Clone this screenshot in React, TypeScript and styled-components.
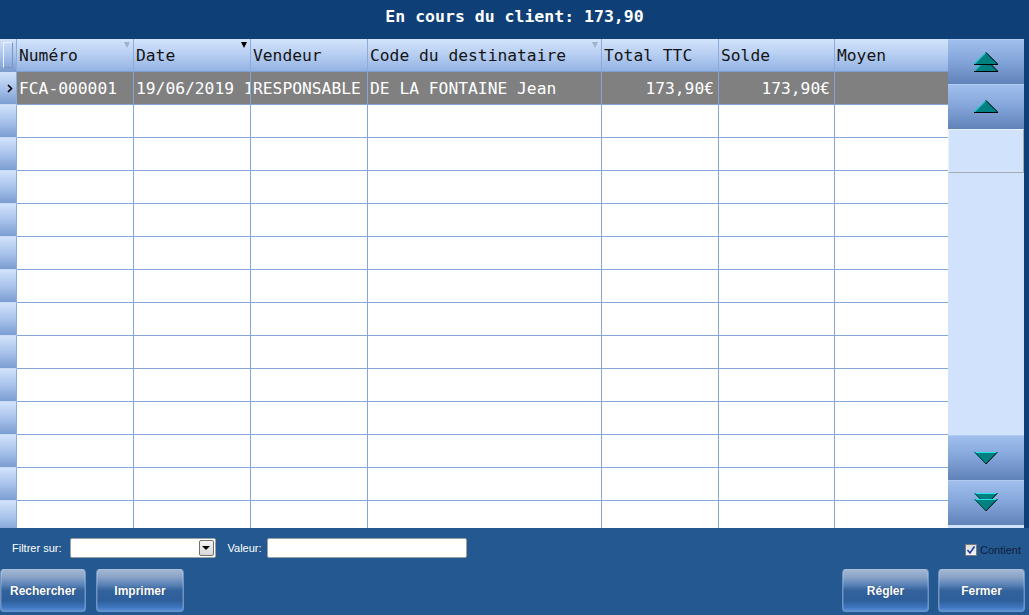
import React from 'react';
import styled, { createGlobalStyle } from 'styled-components';

const GlobalStyle = createGlobalStyle`
  html, body {
    margin: 0;
    padding: 0;
  }
  body {
    background: #0e3f76;
    overflow: hidden;
  }
`;

const COLUMNS = '17px 117px 117px 117px 234px 117px 116px 114px';
const MONO = '"DejaVu Sans Mono", "Liberation Mono", monospace';
const SANS = '"Liberation Sans", Arial, sans-serif';

const Window = styled.div`
  width: 1029px;
  height: 615px;
  display: flex;
  flex-direction: column;
  background: #0e3f76;
`;

const TitleBar = styled.div`
  height: 39px;
  padding-bottom: 6px;
  box-sizing: border-box;
  display: flex;
  align-items: center;
  justify-content: center;
  color: #ffffff;
  font-family: ${MONO};
  font-weight: bold;
  font-size: 16.5px;
`;

const Main = styled.div`
  height: 489px;
  display: flex;
  padding-right: 5px;
`;

const Grid = styled.div`
  width: 949px;
  height: 489px;
  overflow: hidden;
  background: #ffffff;
`;

const Row = styled.div`
  display: grid;
  grid-template-columns: ${COLUMNS};
  height: 33px;
`;

const HeaderCell = styled.div`
  position: relative;
  box-sizing: border-box;
  height: 33px;
  padding-left: 2px;
  display: flex;
  align-items: center;
  background: linear-gradient(180deg, #d3e4fb 0%, #b9d0f3 45%, #93b3e3 100%);
  border-right: 1px solid #8cabdb;
  border-bottom: 1px solid #7f9fd2;
  font-family: ${MONO};
  font-size: 16.3px;
  color: #141414;
  white-space: nowrap;
  overflow: hidden;
`;

const Selector = styled.div`
  box-sizing: border-box;
  height: 33px;
  display: flex;
  align-items: center;
  justify-content: center;
  padding-left: 3px;
  background: linear-gradient(180deg, #d2e3fb 0%, #a9c3ec 50%, #7b9dd1 100%);
  border-right: 1px solid #8cabdb;
  border-bottom: 1px solid #c8daf6;
`;

const HeaderSelector = styled(Selector)`
  padding-left: 0;
  border-bottom-color: #7f9fd2;
`;

const HeaderSelectorBox = styled.div`
  width: 10px;
  height: 26px;
  box-sizing: border-box;
  border: 1px solid #eef3fc;
  border-right-color: #7c95bd;
  border-bottom-color: #7c95bd;
`;

const Cell = styled.div<{ $align?: 'left' | 'right'; $selected?: boolean }>`
  box-sizing: border-box;
  height: 33px;
  display: flex;
  align-items: center;
  justify-content: ${p => (p.$align === 'right' ? 'flex-end' : 'flex-start')};
  padding: 0 4px 0 2px;
  background: ${p => (p.$selected ? '#808080' : '#ffffff')};
  color: ${p => (p.$selected ? '#ffffff' : '#000000')};
  border-right: 1px solid #86a5d8;
  border-bottom: 1px solid #86a5d8;
  font-family: ${MONO};
  font-size: 16.3px;
  white-space: nowrap;
  overflow: hidden;
`;

const SortMark = styled.span<{ $filled?: boolean }>`
  position: absolute;
  top: 3px;
  right: 3px;
  width: 0;
  height: 0;
  border-left: 3px solid transparent;
  border-right: 3px solid transparent;
  border-top: 6px solid ${p => (p.$filled ? '#000000' : '#9fb2cc')};
`;

const ScrollPanel = styled.div`
  width: 76px;
  height: 489px;
  display: flex;
  flex-direction: column;
  background: #d0e2fc;
  padding-bottom: 3px;
  box-sizing: border-box;
`;

const ScrollButton = styled.div`
  height: 45px;
  flex-shrink: 0;
  display: flex;
  align-items: center;
  justify-content: center;
  background: linear-gradient(180deg, #a0bfee 0%, #86a7db 45%, #5f82b9 100%);
  border-top: 1px solid #b2cbf0;
  box-sizing: border-box;
`;

const ScrollThumb = styled.div`
  height: 44px;
  flex-shrink: 0;
  box-sizing: border-box;
  border: 1px solid #a5a9b0;
  border-top-color: #e8f0fc;
  border-left-color: #e8f0fc;
  background: #d0e2fc;
`;

const ScrollTrack = styled.div`
  flex: 1;
`;

const BottomPanel = styled.div`
  height: 87px;
  background: #245890;
  display: flex;
  flex-direction: column;
`;

const FilterRow = styled.div`
  display: flex;
  align-items: center;
  height: 20px;
  margin-top: 10px;
  padding: 0 8px 0 12px;
  font-family: ${SANS};
  font-size: 11px;
  color: #ffffff;
`;

const Label = styled.span<{ $gap: number }>`
  margin-right: ${p => p.$gap}px;
`;

const SelectBox = styled.div`
  width: 146px;
  height: 20px;
  box-sizing: border-box;
  background: #ffffff;
  border: 1px solid #a0a0a0;
  border-radius: 2px;
  display: flex;
  justify-content: flex-end;
  align-items: center;
  padding-right: 1px;
  margin-right: 12px;
`;

const SelectArrow = styled.div`
  width: 15px;
  height: 16px;
  box-sizing: border-box;
  border: 1px solid #707070;
  border-radius: 2px;
  background: linear-gradient(180deg, #f4f4f4 0%, #d8d8d8 100%);
  display: flex;
  align-items: center;
  justify-content: center;

  &::after {
    content: '';
    border-left: 4px solid transparent;
    border-right: 4px solid transparent;
    border-top: 4px solid #000000;
  }
`;

const TextInput = styled.div`
  width: 200px;
  height: 20px;
  box-sizing: border-box;
  background: #ffffff;
  border: 1px solid #a0a0a0;
  border-radius: 2px;
`;

const CheckWrap = styled.div`
  margin-left: auto;
  display: flex;
  align-items: center;
  gap: 3px;
  margin-top: 4px;
  color: #10203a;
`;

const CheckBox = styled.span`
  width: 12px;
  height: 12px;
  box-sizing: border-box;
  border: 1px solid #7a7a7a;
  background: linear-gradient(180deg, #dcdcdc, #f6f6f6);
  display: flex;
  align-items: center;
  justify-content: center;
`;

const ButtonRow = styled.div`
  display: flex;
  justify-content: space-between;
  margin-top: 11px;
  padding-right: 4px;
`;

const ButtonGroup = styled.div<{ $gap: number }>`
  display: flex;
  gap: ${p => p.$gap}px;
`;

const ActionButton = styled.div<{ $width: number }>`
  width: ${p => p.$width}px;
  height: 43px;
  box-sizing: border-box;
  display: flex;
  align-items: center;
  justify-content: center;
  border: 1px solid #6f93c4;
  border-top-color: #a9bcd6;
  border-radius: 4px;
  background: linear-gradient(180deg, #a3b7d3 0%, #87a2c7 18%, #5a82b6 36%, #33629c 50%, #2e5f9c 75%, #3f78c0 92%, #5a92d8 100%);
  box-shadow: inset 1px 0 0 rgba(255, 255, 255, 0.15), inset -1px 0 0 rgba(255, 255, 255, 0.15);
  color: #ffffff;
  font-family: ${SANS};
  font-weight: bold;
  font-size: 12px;
  text-shadow: 0 0 1px rgba(0, 0, 0, 0.4);
`;

const Arrow: React.FC<{ dir: 'up' | 'down'; double?: boolean }> = ({ dir, double }) => {
  const tri = (y: number) =>
    dir === 'up' ? (
      <g key={y}>
        <polygon points={`12,${y} 0,${y + 12} 24,${y + 12}`} fill="#008080" />
        <line x1="0.5" y1={y + 12} x2="12" y2={y + 0.5} stroke="#22e6e6" strokeWidth="1" />
        <line x1="12" y1={y + 0.5} x2="23.5" y2={y + 12} stroke="#000" strokeWidth="1" />
        <line x1="0" y1={y + 12.5} x2="24" y2={y + 12.5} stroke="#000" strokeWidth="1" />
      </g>
    ) : (
      <g key={y}>
        <polygon points={`0,${y} 24,${y} 12,${y + 12}`} fill="#008080" />
        <line x1="0" y1={y + 0.5} x2="24" y2={y + 0.5} stroke="#22e6e6" strokeWidth="1" />
        <line x1="23.5" y1={y} x2="12" y2={y + 12} stroke="#000" strokeWidth="1" />
        <line x1="0.5" y1={y} x2="12" y2={y + 12} stroke="#0a3a3a" strokeWidth="1" />
      </g>
    );
  if (dir === 'up') {
    return (
      <svg width="25" height={double ? 21 : 14} viewBox={`0 0 25 ${double ? 21 : 14}`}>
        {double ? [tri(7), tri(0)] : tri(0)}
      </svg>
    );
  }
  return (
    <svg width="25" height={double ? 20 : 13} viewBox={`0 0 25 ${double ? 20 : 13}`}>
      {double ? [tri(0), tri(6)] : tri(0)}
    </svg>
  );
};

const Chevron = () => (
  <svg width="6" height="9" viewBox="0 0 6 9">
    <polyline points="1,1 4.5,4.5 1,8" fill="none" stroke="#000" strokeWidth="1.6" />
  </svg>
);

const Check = () => (
  <svg width="10" height="10" viewBox="0 0 10 10">
    <polyline points="1.5,5 4,8 8.5,1.5" fill="none" stroke="#2040a0" strokeWidth="1.6" />
  </svg>
);

type Column = { label: string; align?: 'left' | 'right'; sort?: 'hollow' | 'filled' };

const columns: Column[] = [
  { label: 'Numéro', sort: 'hollow' },
  { label: 'Date', sort: 'filled' },
  { label: 'Vendeur' },
  { label: 'Code du destinataire', sort: 'hollow' },
  { label: 'Total TTC', align: 'right' },
  { label: 'Solde', align: 'right' },
  { label: 'Moyen' },
];

const rows: string[][] = [
  ['FCA-000001', '19/06/2019 14:32', 'RESPONSABLE', 'DE LA FONTAINE Jean', '173,90€', '173,90€', ''],
];

const TOTAL_ROWS = 14;

export default function App() {
  const body = Array.from({ length: TOTAL_ROWS }, (_, i) => rows[i] ?? null);

  return (
    <Window>
      <GlobalStyle />
      <TitleBar>En cours du client: 173,90</TitleBar>
      <Main>
        <Grid>
          <Row>
            <HeaderSelector>
              <HeaderSelectorBox />
            </HeaderSelector>
            {columns.map(col => (
              <HeaderCell key={col.label}>
                {col.label}
                {col.sort && <SortMark $filled={col.sort === 'filled'} />}
              </HeaderCell>
            ))}
          </Row>
          {body.map((data, i) => (
            <Row key={i}>
              <Selector>{data && <Chevron />}</Selector>
              {columns.map((col, c) => (
                <Cell key={col.label} $align={col.align} $selected={!!data}>
                  {data ? data[c] : ''}
                </Cell>
              ))}
            </Row>
          ))}
        </Grid>
        <ScrollPanel>
          <ScrollButton>
            <Arrow dir="up" double />
          </ScrollButton>
          <ScrollButton>
            <Arrow dir="up" />
          </ScrollButton>
          <ScrollThumb />
          <ScrollTrack />
          <ScrollButton>
            <Arrow dir="down" />
          </ScrollButton>
          <ScrollButton>
            <Arrow dir="down" double />
          </ScrollButton>
        </ScrollPanel>
      </Main>
      <BottomPanel>
        <FilterRow>
          <Label $gap={8}>Filtrer sur:</Label>
          <SelectBox>
            <SelectArrow />
          </SelectBox>
          <Label $gap={5}>Valeur:</Label>
          <TextInput />
          <CheckWrap>
            <CheckBox>
              <Check />
            </CheckBox>
            Contient
          </CheckWrap>
        </FilterRow>
        <ButtonRow>
          <ButtonGroup $gap={10}>
            <ActionButton $width={86}>Rechercher</ActionButton>
            <ActionButton $width={88}>Imprimer</ActionButton>
          </ButtonGroup>
          <ButtonGroup $gap={9}>
            <ActionButton $width={87}>Régler</ActionButton>
            <ActionButton $width={87}>Fermer</ActionButton>
          </ButtonGroup>
        </ButtonRow>
      </BottomPanel>
    </Window>
  );
}
